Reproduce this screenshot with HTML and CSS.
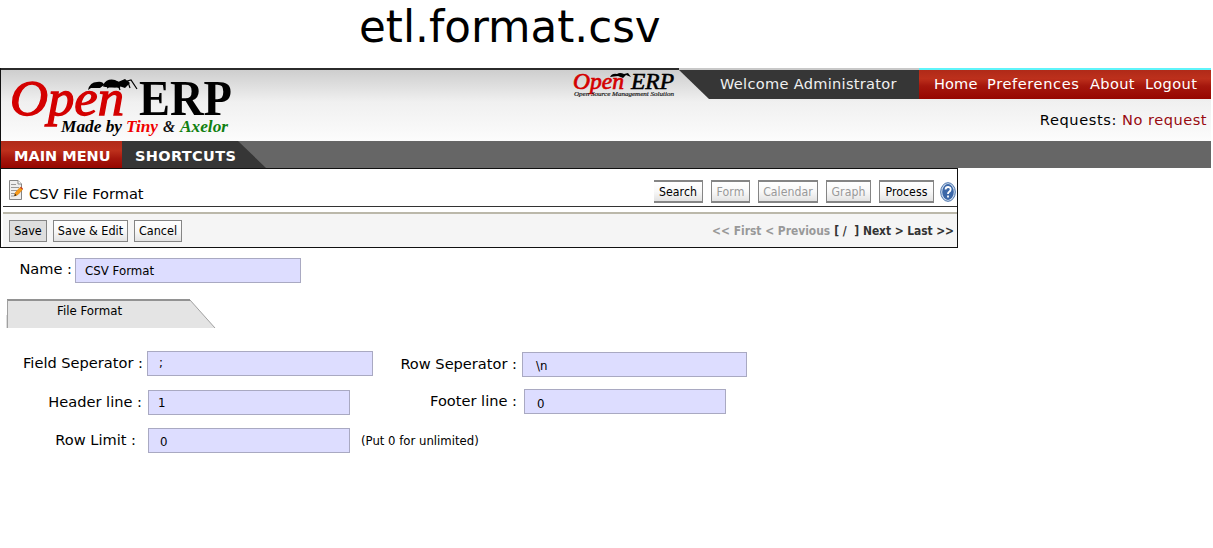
FILE: index.html
```
<!DOCTYPE html>
<html lang="en">
<head>
<meta charset="utf-8">
<title>etl.format.csv</title>
<link rel="stylesheet" href="styles.css">
</head>
<body>
<h1 class="title">etl.format.csv</h1>
<header class="header">
  <div class="edge"><i class="edge-dark"></i><i class="edge-grey"></i><i class="edge-cyan"></i></div>
  <div class="banner">
    <svg class="logo" width="240" height="71" viewBox="0 70 240 71">
      <g font-family="'Liberation Serif',serif">
        <text x="10" y="115" font-size="51" font-style="italic" fill="#d40000" stroke="#d40000" stroke-width="1.300" textLength="114" lengthAdjust="spacingAndGlyphs">Open</text>
        <text x="139" y="114.500" font-size="50" font-weight="bold" fill="#000" textLength="93" lengthAdjust="spacingAndGlyphs">ERP</text>
        <g font-size="17" font-style="italic" font-weight="bold">
          <text x="61" y="131.500" fill="#000" textLength="61" lengthAdjust="spacingAndGlyphs">Made by</text>
          <text x="126" y="131.500" fill="#f00000" textLength="32" lengthAdjust="spacingAndGlyphs">Tiny</text>
          <text x="163" y="131.500" fill="#111" textLength="12" lengthAdjust="spacingAndGlyphs">&amp;</text>
          <text x="180" y="131.500" fill="#108010" textLength="48" lengthAdjust="spacingAndGlyphs">Axelor</text>
        </g>
      </g>
      <path d="M88 90Q90 82 97 82Q103 81 104 85L100 88L91 88ZM103 85Q107 78 115 80L121 83L120 88L112 87L105 87ZM118 82L125 79L130 83L125 88L119 86Z"/>
      <path d="M103 86L115 87L128 82L130 88M107 88L117 82L120 90M127 81L131 80L137 89" fill="none" stroke="#000" stroke-width="1.200"/>
    </svg>
    <svg class="minilogo" width="108" height="30" viewBox="570 70 108 30">
      <g font-family="'Liberation Serif',serif" font-style="italic">
        <text x="573" y="89" font-size="23" fill="#d40000" stroke="#d40000" stroke-width=".7" textLength="51" lengthAdjust="spacingAndGlyphs">Open</text>
        <text x="631" y="88.500" font-size="23" fill="#000" stroke="#000" stroke-width=".6" textLength="43" lengthAdjust="spacingAndGlyphs">ERP</text>
        <text x="574" y="95.500" font-size="6.500" fill="#222" stroke="#222" stroke-width=".2" textLength="100" lengthAdjust="spacingAndGlyphs">Open Source Management Solution</text>
      </g>
      <path d="M610 77Q612 73 617 74Q620 72 624 74L628 73L631 77L626 75L623 78L618 76Z"/>
    </svg>
    <div class="account">
      <div class="account-bar">
        <div class="welcome"><span>Welcome Administrator</span></div>
        <nav class="links"><span class="l1">Home</span><span class="l2">Preferences</span><span class="l3">About</span><span class="l4">Logout</span></nav>
      </div>
      <div class="requests"><span class="t-req">Requests:</span><span class="t-noreq">No request</span></div>
    </div>
  </div>
  <nav class="menu">
    <div class="main-menu"><span>MAIN MENU</span></div>
    <div class="shortcuts"><span>SHORTCUTS</span></div>
  </nav>
</header>
<section class="panel">
  <div class="panel-head">
    <svg class="note" width="14" height="20" viewBox="0 0 14 20">
      <path d="M.5 .5H9L12.500 4V19.500H.5Z" fill="#eee" stroke="#858585"/>
      <path d="M9 .5V4H12.500" fill="#fff" stroke="#858585"/>
      <path d="M2 4.500H7M2 7.500H10M2 10.500H8M2 13.500H6M2 16H5" stroke="#999"/>
      <path d="M5.500 16L6.500 12.500L11 7.500L13.500 9.500L9 14.500Z" fill="#f79a18" stroke="#e07c00" stroke-width=".7"/>
      <path d="M5.300 16.300L6 13.800L7.600 15.300Z" fill="#222"/><path d="M11 7.500L12 6.800L14 8.500L13.300 9.500Z" fill="#cb3c20"/>
    </svg>
    <span class="panel-title">CSV File Format</span>
    <div class="views">
      <button class="btn view first" style="width:49px">Search</button>
      <button class="btn view off" style="width:39px">Form</button>
      <button class="btn view off" style="width:60px">Calendar</button>
      <button class="btn view off" style="width:45px">Graph</button>
      <button class="btn view" style="width:55px">Process</button>
    </div>
    <svg class="help" width="16" height="20" viewBox="0 0 16 20">
      <ellipse cx="8" cy="10" rx="7.300" ry="9.300" fill="#dce8f5" stroke="#426ca8" stroke-width="1"/>
      <ellipse cx="8" cy="10" rx="5.800" ry="7.900" fill="#3b67a8"/>
      <path d="M5.500 7.500Q5.800 4.800 8.300 5Q11 5.300 10.600 7.800Q10.300 9.200 8.700 10.200Q8 10.800 8 12M8 13.500V15.500" fill="none" stroke="#fff" stroke-width="1.800"/>
    </svg>
  </div>
  <div class="toolbar">
    <button class="btn act save" style="width:38px">Save</button>
    <button class="btn act" style="width:75px">Save &amp; Edit</button>
    <button class="btn act" style="width:48px">Cancel</button>
    <div class="pager"><span class="p1">&lt;&lt; First &lt; Previous</span><span class="p2">[ /&nbsp; ]</span><span class="p3">Next &gt; Last &gt;&gt;</span></div>
  </div>
</section>
<main class="form">
  <div class="row r-name"><label>Name :</label><div class="field v-name">CSV Format</div></div>
  <div class="tab">
    <svg width="210" height="29" viewBox="0 0 210 29"><path d="M1 1H184L209 29H1Z" fill="#e4e4e4"/><path d="M1 1H184" stroke="#929292" stroke-width="2"/><path d="M184 1L209 29M1.500 1V29" fill="none" stroke="#a0a0a0"/><path d="M.5 16V29" stroke="#ddd"/></svg>
    <span>File Format</span>
  </div>
  <div class="columns">
    <div class="left">
      <div class="row r-fs"><label>Field Seperator :</label><div class="field v-fs">;</div></div>
      <div class="row r-hl"><label>Header line :</label><div class="field v-hl">1</div></div>
      <div class="row r-rl"><label>Row Limit :</label><div class="field v-rl">0</div><span class="hint">(Put 0 for unlimited)</span></div>
    </div>
    <div class="right">
      <div class="row r-rs"><label>Row Seperator :</label><div class="field v-rs">\n</div></div>
      <div class="row r-fl"><label>Footer line :</label><div class="field v-fl">0</div></div>
    </div>
  </div>
</main>
</body>
</html>
```
FILE: styles.css
```
* { box-sizing: border-box; }
body { margin: 0; background: #fff; color: #000; font-family: "DejaVu Sans", sans-serif; font-size: 14.6px; width: 1213px; height: 548px; overflow: hidden; }
svg { display: block; flex: none; }
span, label { white-space: nowrap; }
.title { margin: 0; padding-left: 359px; height: 68px; font-size: 43.6px; font-weight: 400; line-height: 54px; }
.header { width: 1211px; height: 100px; border-left: 1px solid #111; }
.edge { display: flex; height: 2px; }
.edge-dark { width: 678px; background: #2b2b2b; }
.edge-grey { width: 240px; background: #c8c8c8; }
.edge-cyan { width: 292px; background: #5ff4fa; }
.banner { display: flex; height: 71px; background: linear-gradient(#cecece, #f0f0f0 45%, #fcfcfc); }
.logo { margin-left: -1px; }
.minilogo { margin-left: 330px; }
.account { margin-left: 1px; width: 532px; }
.account-bar { display: flex; height: 29px; }
.welcome { width: 240px; padding-left: 41px; background: #363636; clip-path: polygon(0 0, 100% 0, 100% 100%, 30px 100%); color: #f0f0f0; line-height: 28px; letter-spacing: .28px; }
.links { display: flex; flex: 1; padding-left: 15px; background: linear-gradient(#b02a18, #bd301c 30%, #a5170d 55%, #960600); color: #fff; line-height: 28px; }
.l1 { width: 53px; letter-spacing: .1px; }
.l2 { width: 103px; letter-spacing: .6px; }
.l3 { width: 55px; letter-spacing: .35px; }
.l4 { letter-spacing: .4px; }
.requests { display: flex; justify-content: flex-end; gap: 5px; padding-right: 4px; line-height: 42px; }
.t-req { letter-spacing: .6px; }
.t-noreq { color: #980a10; letter-spacing: .5px; }
.menu { display: flex; height: 27px; background: #666; color: #fff; font-weight: bold; font-size: 14.5px; line-height: 31px; }
.main-menu { width: 121px; padding-left: 13px; background: linear-gradient(#b02a18, #bd301c 35%, #a5170d 65%, #960600); }
.shortcuts { width: 144px; padding-left: 13px; background: #363636; clip-path: polygon(0 0, 116px 0, 100% 100%, 0 100%); letter-spacing: .35px; }
.panel { width: 958px; height: 80px; border: 1px solid #111; background: #fff; }
.panel-head { display: flex; height: 38px; margin-left: 2px; border-bottom: 1px solid #333; }
.note { margin: 11px 0 0 6px; }
.panel-title { margin-left: 6px; line-height: 50px; font-size: 14.6px; }
.views { display: flex; gap: 8px; margin: 11px 0 0 auto; }
.btn { display: flex; justify-content: center; align-items: center; padding: 0; margin: 0; height: 22px; border: 1px solid #858585; background: linear-gradient(#fff, #f8f8f8 50%, #e3e3e3); color: #000; font-family: "DejaVu Sans Condensed", "DejaVu Sans", sans-serif; font-stretch: condensed; font-size: 12.2px; white-space: nowrap; }
.view { height: 23px; border-width: 2px 1px 2px 1px; letter-spacing: .05px; }
.first { border-left: 0; }
.off { color: #999; }
.help { margin: 13px 1px 0 6px; }
.toolbar { display: flex; gap: 6px; height: 35px; margin: 5px 0 0 2px; padding: 6px 3px 0 6px; border-top: 2px solid #bbb8aa; background: #f5f5f5; }
.act { font-size: 12.5px; padding-bottom: 1px; }
.save { background: #dedede; }
.pager { display: flex; gap: 4px; margin-left: auto; font-family: "DejaVu Sans Condensed", "DejaVu Sans", sans-serif; font-stretch: condensed; font-weight: bold; font-size: 11.9px; line-height: 22px; color: #333; }
.p3 { letter-spacing: -.06px; }
.p1 { color: #999; }
.row { display: flex; height: 25px; }
.row > * { flex: none; }
.row label { line-height: 24px; text-align: right; }
.field { height: 25px; border: 1px solid #a9a9c2; background: #ddf; font-size: 11.8px; line-height: 25px; }
.r-name { margin-top: 10px; height: 24px; }
.r-name label { width: 72px; line-height: 22px; }
.v-name { margin-left: 3px; width: 226px; padding-left: 9px; line-height: 24px; }
.tab { display: grid; width: 210px; height: 29px; margin: 17px 0 0 6px; }
.tab > * { grid-area: 1 / 1; }
.tab span { padding-left: 51px; font-size: 11.8px; line-height: 24px; }
.columns { display: flex; margin-top: 23px; }
.left { width: 390px; }
.left label { width: 143px; }
.v-fs { margin-left: 4px; width: 226px; padding-left: 11px; line-height: 23px; }
.r-hl { margin-top: 14px; }
.left .r-hl label { width: 142px; }
.v-hl { margin-left: 6px; width: 202px; padding-left: 9px; }
.r-rl { margin-top: 13px; }
.left .r-rl label { width: 136px; }
.v-rl { margin-left: 12px; width: 202px; padding-left: 11px; line-height: 26px; }
.hint { margin-left: 11px; font-size: 11.7px; line-height: 26px; }
.right { padding-top: 1px; }
.right label { width: 127px; }
.v-rs { margin-left: 5px; width: 225px; padding-left: 13px; line-height: 27px; }
.r-fl { margin-top: 12px; }
.v-fl { margin-left: 7px; width: 202px; padding-left: 12px; line-height: 28px; }
```
